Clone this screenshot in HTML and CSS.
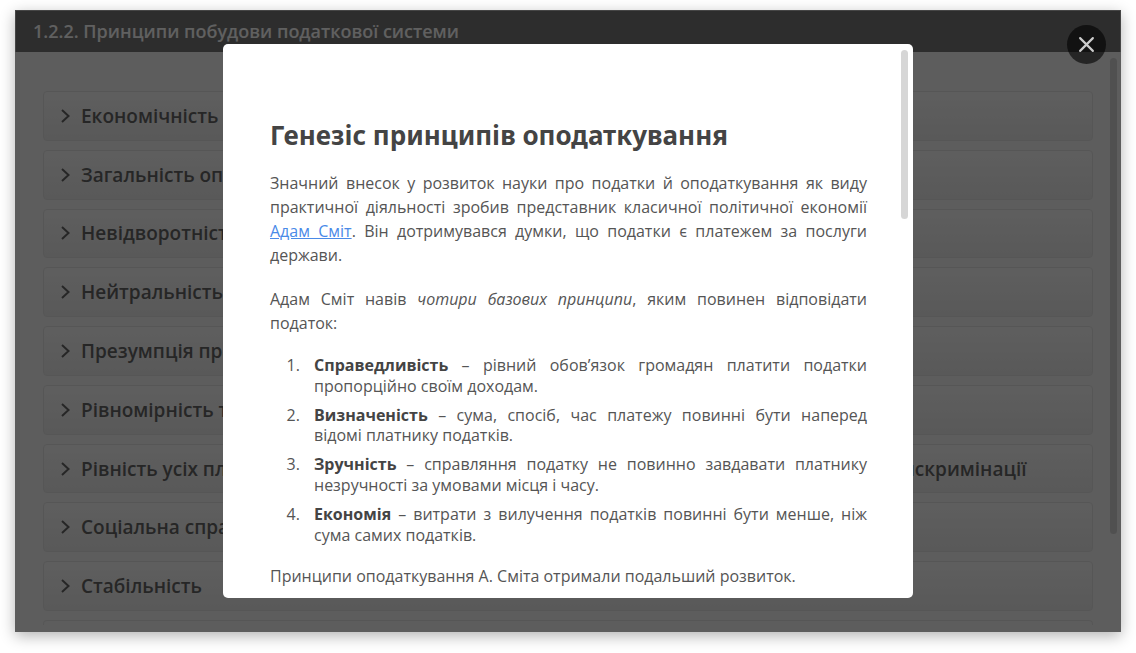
FILE: index.html
```html
<!DOCTYPE html>
<html lang="uk">
<head>
<meta charset="utf-8">
<title>1.2.2. Принципи побудови податкової системи</title>
<link rel="stylesheet" href="styles.css">
</head>
<body>
<div class="stage">
  <header class="stage-header"><h1 class="stage-title">1.2.2. Принципи побудови податкової системи</h1></header>
  <main class="stage-body">
    <div class="accordion">
      <button class="item" type="button"><svg class="chevron" viewBox="0 0 10 16"><path d="M1 2 7.500 8 1 14"/></svg>Економічність оподаткування</button>
      <button class="item" type="button"><svg class="chevron" viewBox="0 0 10 16"><path d="M1 2 7.500 8 1 14"/></svg>Загальність оподаткування</button>
      <button class="item" type="button"><svg class="chevron" viewBox="0 0 10 16"><path d="M1 2 7.500 8 1 14"/></svg>Невідворотність настання відповідальності</button>
      <button class="item" type="button"><svg class="chevron" viewBox="0 0 10 16"><path d="M1 2 7.500 8 1 14"/></svg>Нейтральність оподаткування</button>
      <button class="item" type="button"><svg class="chevron" viewBox="0 0 10 16"><path d="M1 2 7.500 8 1 14"/></svg>Презумпція правомірності рішень платника</button>
      <button class="item" type="button"><svg class="chevron" viewBox="0 0 10 16"><path d="M1 2 7.500 8 1 14"/></svg>Рівномірність та зручність сплати</button>
      <button class="item" type="button"><svg class="chevron" viewBox="0 0 10 16"><path d="M1 2 7.500 8 1 14"/></svg>Рівність усіх платників перед законом, недопущення будь-яких проявів податкової дискримінації</button>
      <button class="item" type="button"><svg class="chevron" viewBox="0 0 10 16"><path d="M1 2 7.500 8 1 14"/></svg>Соціальна справедливість</button>
      <button class="item" type="button"><svg class="chevron" viewBox="0 0 10 16"><path d="M1 2 7.500 8 1 14"/></svg>Стабільність</button>
      <div class="item-peek"></div>
    </div>
    <div class="stage-scroll"></div>
  </main>
  <div class="overlay">
    <section class="dialog" role="dialog" aria-labelledby="dialog-title">
      <div class="content">
        <h2 class="dialog-title" id="dialog-title">Генезіс принципів оподаткування</h2>
        <p class="text">Значний внесок у розвиток науки про податки й оподаткування як виду практичної діяльності зробив представник класичної політичної економії <a class="link" href="#">Адам Сміт</a>. Він дотримувався думки, що податки є платежем за послуги держави.</p>
        <p class="text">Адам Сміт навів <em>чотири базових принципи</em>, яким повинен відповідати податок:</p>
        <ol class="principles">
          <li><strong>Справедливість</strong> – рівний обов’язок громадян платити податки пропорційно своїм доходам.</li>
          <li><strong>Визначеність</strong> – сума, спосіб, час платежу повинні бути наперед відомі платнику податків.</li>
          <li><strong>Зручність</strong> – справляння податку не повинно завдавати платнику незручності за умовами місця і часу.</li>
          <li><strong>Економія</strong> – витрати з вилучення податків повинні бути менше, ніж сума самих податків.</li>
        </ol>
        <p class="text">Принципи оподаткування А. Сміта отримали подальший розвиток.</p>
      </div>
      <div class="dialog-scroll"></div>
    </section>
  </div>
  <button class="close" type="button" aria-label="Закрити"><svg class="close-icon" viewBox="0 0 16 16"><path d="M2 2l12 12M14 2 2 14"/></svg></button>
</div>
</body>
</html>
```
FILE: styles.css
```css
* { box-sizing: border-box; }
body {
  margin: 0;
  height: 100vh;
  padding: 10px 15px 21px;
  background: #fff;
  font-family: "Open Sans", "Noto Sans", sans-serif;
}
.stage {
  position: relative;
  height: 100%;
  display: flex;
  flex-direction: column;
  background: #e8e8e8;
  box-shadow: 0 4px 14px rgba(0, 0, 0, .3);
}
.stage-header {
  flex: none;
  padding: 8px 17px 9px;
  background: #707070;
  border: 1px solid #b0b0b0;
  border-bottom: 0;
}
.stage-title {
  margin: 0;
  font: 650 18px/24px "Open Sans", sans-serif;
  color: #f0f0f0;
}
.stage-body {
  flex: 1;
  min-height: 0;
  display: flex;
  justify-content: space-between;
  gap: 17px;
  padding: 6px 4px 7px 28px;
}
.accordion {
  flex: 1;
  min-width: 0;
  margin-top: 33px;
  display: flex;
  flex-direction: column;
  gap: 9px;
}
.item {
  flex: 1;
  min-height: 0;
  display: flex;
  align-items: center;
  gap: 10px;
  padding: 0 17px;
  border: 1px solid #d8d8d8;
  border-radius: 4px;
  background: linear-gradient(#ececec, #dedede);
  font: 650 19px/24px "Open Sans", sans-serif;
  color: #606060;
  text-align: left;
  white-space: nowrap;
}
.chevron {
  flex: none;
  width: 10px;
  height: 16px;
  fill: none;
  stroke: #606060;
  stroke-width: 2;
}
.item-peek {
  flex: none;
  height: 5px;
  border: 1px solid #d8d8d8;
  border-bottom: 0;
  border-radius: 4px 4px 0 0;
}
.stage-scroll {
  width: 7px;
  height: 84%;
  border-radius: 4px;
  background: #c8c8c8;
}
.overlay {
  position: absolute;
  inset: 0;
  display: flex;
  justify-content: center;
  padding: 34px 16px;
  background: rgba(0, 0, 0, .6);
}
.dialog {
  position: relative;
  width: 100%;
  max-width: 690px;
  overflow: hidden;
  padding: 72px 46px 0 47px;
  border-radius: 5px;
  background: #fff;
  color: #555;
}
.dialog-title {
  margin: 0 0 17px;
  font: 700 26px/38px "Noto Sans", sans-serif;
  color: #444;
}
.text {
  margin: 0 0 20px;
  font-size: 16px;
  line-height: 24px;
  text-align: justify;
}
.link { color: #4a8ae8; }
.principles {
  margin: 0 0 19px;
  padding: 0 0 0 34px;
  font-size: 16px;
  line-height: 1.3;
  text-align: justify;
}
.principles li { padding-left: 10px; margin-bottom: 8px; }
.principles strong { color: #444; }
.dialog-scroll {
  position: absolute;
  top: 6px;
  right: 5px;
  width: 7px;
  height: 169px;
  border-radius: 4px;
  background: #d6d6d6;
}
.close {
  position: absolute;
  top: 15px;
  right: 15px;
  width: 39px;
  height: 39px;
  display: grid;
  place-items: center;
  padding: 0;
  border: 0;
  border-radius: 50%;
  background: rgba(0, 0, 0, .6);
}
.close-icon {
  width: 17px;
  height: 17px;
  fill: none;
  stroke: #ccc;
  stroke-width: 2;
  stroke-linecap: round;
}
```
